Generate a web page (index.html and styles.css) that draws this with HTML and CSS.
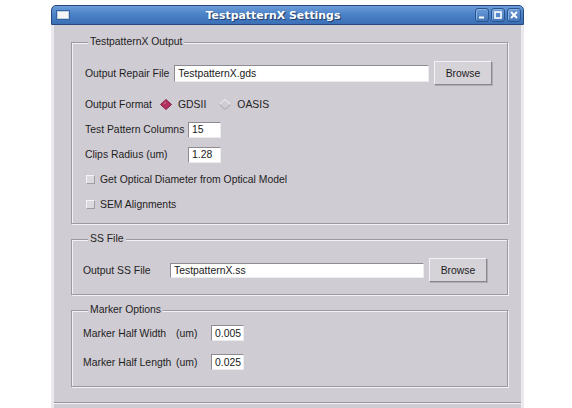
FILE: index.html
```html
<!DOCTYPE html>
<html>
<head>
<meta charset="utf-8">
<title>TestpatternX Settings</title>
<link rel="stylesheet" href="styles.css">
</head>
<body>
<div class="window">
  <div class="titlebar">
    <span class="win-icon"></span>
    <span class="title">TestpatternX Settings</span>
    <div class="tb-buttons">
      <span class="tb-btn"><svg width="8" height="8" viewBox="0 0 8 8"><rect x="1" y="5.5" width="5" height="2" fill="#fff"/></svg></span>
      <span class="tb-btn"><svg width="8" height="8" viewBox="0 0 8 8"><rect x="1" y="1" width="6" height="6" fill="none" stroke="#fff" stroke-width="1.6"/></svg></span>
      <span class="tb-btn"><svg width="8" height="8" viewBox="0 0 8 8"><path d="M1 1 L7 7 M7 1 L1 7" stroke="#fff" stroke-width="1.8"/></svg></span>
    </div>
  </div>
  <div class="panel">
    <div class="group">
      <div class="group-title">TestpatternX Output</div>
      <div class="g1-body">
        <div class="row row-file">
          <span class="lbl">Output Repair File</span>
          <div class="input wide">TestpatternX.gds</div>
          <div class="button">Browse</div>
        </div>
        <div class="row row-std">
          <span class="lbl">Output Format</span>
          <span class="radio on"><svg width="12" height="11" viewBox="0 0 12 11"><polygon points="6,0.5 11.5,5.5 6,10.5 0.5,5.5" fill="#b3305e" stroke="#8a1f45" stroke-width="1"/><polygon points="6,2 3,5 6,5" fill="#c9587f"/></svg></span>
          <span class="opt">GDSII</span>
          <span class="radio off"><svg width="12" height="11" viewBox="0 0 12 11"><polyline points="0.5,5.5 6,0.5 11.5,5.5" fill="none" stroke="#f6f4f8" stroke-width="1"/><polyline points="0.5,5.5 6,10.5 11.5,5.5" fill="none" stroke="#a9a5ad" stroke-width="1"/></svg></span>
          <span class="opt">OASIS</span>
        </div>
        <div class="row row-std">
          <span class="lbl fixed">Test Pattern Columns</span>
          <div class="input small">15</div>
        </div>
        <div class="row row-std">
          <span class="lbl fixed">Clips Radius (um)</span>
          <div class="input small">1.28</div>
        </div>
        <div class="row row-std">
          <span class="check"></span>
          <span class="lbl">Get Optical Diameter from Optical Model</span>
        </div>
        <div class="row row-std">
          <span class="check"></span>
          <span class="lbl">SEM Alignments</span>
        </div>
      </div>
    </div>

    <div class="group">
      <div class="group-title">SS File</div>
      <div class="g2-body">
        <div class="row row-file">
          <span class="lbl ss">Output SS File</span>
          <div class="input wide ss-input">TestpatternX.ss</div>
          <div class="button">Browse</div>
        </div>
      </div>
    </div>

    <div class="group">
      <div class="group-title">Marker Options</div>
      <div class="g3-body">
        <div class="row row-marker">
          <span class="mlabel"><span class="mname">Marker Half Width</span><span>(um)</span></span>
          <div class="input small mk">0.005</div>
        </div>
        <div class="row row-marker">
          <span class="mlabel"><span class="mname">Marker Half Length</span><span>(um)</span></span>
          <div class="input small mk">0.025</div>
        </div>
      </div>
    </div>

    <div class="separator"></div>
  </div>
</div>
</body>
</html>
```

FILE: styles.css
```css
* {
  box-sizing: border-box;
}

html {
  overflow: hidden;
}

html, body {
  margin: 0;
  padding: 0;
  background: #ffffff;
}

body {
  font-family: "Liberation Sans", Arial, sans-serif;
  font-size: 10.4px;
  color: #1e1e1e;
  padding: 5px 0 0 51px;
}

.window {
  width: 473px;
  height: 410px;
  display: flex;
  flex-direction: column;
}

/* ---------- title bar ---------- */
.titlebar {
  height: 20px;
  flex: none;
  border: 1px solid #25477d;
  border-radius: 5px 5px 0 0;
  background: linear-gradient(#6d9dd9 0%, #4b82c8 45%, #3c70b6 100%);
  display: flex;
  align-items: center;
  padding: 0 2px 0 5px;
}

.win-icon {
  width: 12px;
  height: 8px;
  background: #f5f5f7;
  border: 1px solid #c3cddd;
  box-shadow: 0 0 0 1px #3463a3;
}

.title {
  flex: 1;
  text-align: center;
  color: #ffffff;
  font-family: "DejaVu Sans", "Liberation Sans", sans-serif;
  font-weight: bold;
  font-size: 10.9px;
  text-shadow: 1px 1px 1px #1c3866;
  padding-left: 2px;
}

.tb-buttons {
  display: flex;
  gap: 2px;
}

.tb-btn {
  width: 14px;
  height: 14px;
  border: 1px solid #2a548e;
  border-radius: 3px;
  background: linear-gradient(#6a9ad7, #4578bc);
  box-shadow: inset 1px 1px 0 #86b0e2;
  display: flex;
  align-items: center;
  justify-content: center;
}

.tb-btn svg {
  display: block;
}

/* ---------- panel ---------- */
.panel {
  flex: 1;
  background: #d0ccd3;
  border-left: 3px solid #ebe9ee;
  border-right: 3px solid #ebe9ee;
  padding: 17px 13px 0 17px;
}

.group {
  border: 1px solid #9d99a1;
  box-shadow: 1px 1px 0 #f3f1f5, inset 1px 1px 0 #f3f1f5;
}

.group + .group {
  margin-top: 15px;
}

.group-title {
  width: fit-content;
  margin: -8px 0 0 16px;
  padding: 0 2px;
  line-height: 14px;
  background: #d0ccd3;
}

.g1-body {
  padding: 12px 15px 6px 13px;
}

.g2-body {
  padding: 12px 20px 12px 11px;
}

.g3-body {
  padding: 6px 20px 14px 11px;
  display: flex;
  flex-direction: column;
  gap: 9px;
}

.row {
  display: flex;
  align-items: center;
}

.row-file {
  height: 24px;
  gap: 5px;
}

.g1-body .row-file {
  margin-bottom: 7px;
}

.row-std {
  height: 25px;
}

.row-marker {
  height: 20px;
}

.lbl {
  white-space: nowrap;
}

.lbl.fixed {
  width: 103px;
}

.lbl.ss {
  width: 82px;
}

/* ---------- inputs ---------- */
.input {
  background: #ffffff;
  border-top: 1px solid #8e8a92;
  border-left: 1px solid #8e8a92;
  border-bottom: 1px solid #ecebee;
  border-right: 1px solid #ecebee;
  padding-left: 3px;
  display: flex;
  align-items: center;
  white-space: nowrap;
  color: #1a1a1a;
}

.input.wide {
  flex: 1;
  height: 17px;
}

.input.ss-input {
  height: 15px;
}

.input.small {
  width: 33px;
  height: 16px;
}

.button {
  width: 58px;
  height: 24px;
  background: #d5d2d8;
  border-top: 1px solid #f4f2f6;
  border-left: 1px solid #f4f2f6;
  border-bottom: 1px solid #8b8790;
  border-right: 1px solid #8b8790;
  box-shadow: 1px 1px 0 #b0acb4;
  display: flex;
  align-items: center;
  justify-content: center;
  color: #1e1e1e;
}

/* ---------- radio / check ---------- */
.radio {
  display: flex;
  align-items: center;
}

.radio svg {
  display: block;
}

.radio.on {
  margin-left: 8px;
}

.radio.off {
  margin-left: 13px;
}

.opt {
  margin-left: 6px;
}

.check {
  width: 9px;
  height: 9px;
  margin-left: 1px;
  margin-right: 5px;
  background: #dcdadf;
  border-top: 1px solid #f4f3f6;
  border-left: 1px solid #f4f3f6;
  border-bottom: 1px solid #a19da5;
  border-right: 1px solid #a19da5;
}

/* ---------- marker ---------- */
.mlabel {
  width: 128px;
  display: flex;
  white-space: nowrap;
}

.mname {
  width: 93px;
}

.separator {
  margin: 15px -13px 0 -17px;
  border-top: 1px solid #9a969e;
  border-bottom: 1px solid #f3f1f5;
  height: 2px;
}
```
